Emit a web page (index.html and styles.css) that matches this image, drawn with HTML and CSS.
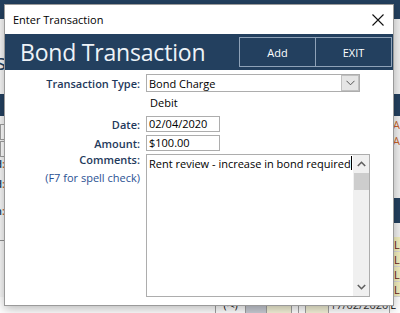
FILE: index.html
```html
<!DOCTYPE html>
<html lang="en">
<head>
    <meta charset="UTF-8">
    <title>Enter Transaction</title>
    <link rel="stylesheet" href="styles.css">
</head>
<body>

    <div class="app">
        <div class="app-top"></div>
        <div class="app-body">
            <div class="side side-left">
                <div class="big-s">s</div>
                <div class="navy-band"></div>
                <div class="cell-box"></div>
                <div class="cell-box"></div>
                <div class="fld">d<span>:</span></div>
                <div class="fld">d<span>:</span></div>
                <div class="fld fld-gap">n<span>:</span></div>
                <div class="rule"></div>
            </div>
            <div class="side side-right">
                <div class="navy-band"></div>
                <div class="tline">A</div>
                <div class="tline">A</div>
                <div class="navy-band band-low"></div>
                <div class="grid-head"></div>
                <div class="yrow">L</div>
                <div class="yrow">L</div>
                <div class="yrow">L</div>
                <div class="yrow">L</div>
            </div>
        </div>
        <div class="app-foot">
            <div class="fcell f-nav">(&middot;&lt;)</div>
            <div class="fcell f-grey"></div>
            <div class="fcell f-yel"></div>
            <div class="fcell f-sm"></div>
            <div class="fcell f-sm"></div>
            <div class="fcell f-yel2"></div>
            <div class="fcell f-date">17/02/2020</div>
            <div class="fcell f-last">L</div>
        </div>
    </div>

    <div class="dialog">
        <div class="titlebar">
            <span class="title">Enter Transaction</span>
            <svg class="close" width="12" height="12" viewBox="0 0 12 12">
                <path d="M0.5 0.5 L11.5 11.5 M11.5 0.5 L0.5 11.5" stroke="#111" stroke-width="1.1" fill="none"/>
            </svg>
        </div>

        <div class="banner">
            <h1>Bond Transaction</h1>
            <div class="banner-btns">
                <button class="hbtn">Add</button>
                <button class="hbtn">EXIT</button>
            </div>
        </div>

        <div class="form">
            <div class="row row-type">
                <label class="lbl">Transaction Type:</label>
                <div class="combo">
                    <span class="combo-val">Bond Charge</span>
                    <span class="combo-btn">
                        <svg width="9" height="6" viewBox="0 0 9 6">
                            <path d="M0.5 0.8 L4.5 4.8 L8.5 0.8" stroke="#555" stroke-width="1" fill="none"/>
                        </svg>
                    </span>
                </div>
            </div>
            <div class="row row-debit">
                <span class="lbl"></span>
                <span class="debit">Debit</span>
            </div>
            <div class="row row-date">
                <label class="lbl">Date:</label>
                <div class="field">02/04/2020</div>
            </div>
            <div class="row row-amount">
                <label class="lbl">Amount:</label>
                <div class="field">$100.00</div>
            </div>
            <div class="row row-comments">
                <div class="lbl lbl-stack">
                    <span>Comments:</span>
                    <span class="hint">(F7 for spell check)</span>
                </div>
                <div class="memo">
                    <div class="memo-text">Rent review - increase in bond required<span class="caret"></span></div>
                    <div class="vscroll">
                        <svg class="arr" width="9" height="6" viewBox="0 0 9 6">
                            <path d="M0.8 5 L4.5 1.3 L8.2 5" stroke="#606060" stroke-width="1.6" fill="none"/>
                        </svg>
                        <div class="thumb"></div>
                        <div class="track"></div>
                        <svg class="arr" width="9" height="6" viewBox="0 0 9 6">
                            <path d="M0.8 1 L4.5 4.7 L8.2 1" stroke="#606060" stroke-width="1.6" fill="none"/>
                        </svg>
                    </div>
                </div>
            </div>
        </div>
    </div>

</body>
</html>
```

FILE: styles.css
```css
body {
    margin: 0;
    width: 400px;
    height: 313px;
    overflow: hidden;
    position: relative;
    font-family: "Open Sans", "Noto Sans", sans-serif;
    background: #f0f0f0;
}

/* background application, mostly hidden by the dialog */
.app {
    display: flex;
    flex-direction: column;
    height: 313px;
}
.app-top {
    height: 25px;
    background: #23405f;
}
.app-body {
    flex: 1;
    display: flex;
    justify-content: space-between;
}
.side {
    display: flex;
    flex-direction: column;
    overflow: hidden;
}
.side-left {
    width: 5px;
    background: #f7f7f7;
    align-items: flex-end;
}
.big-s {
    margin-top: 27px;
    height: 30px;
    font-size: 22px;
    line-height: 30px;
    color: #23405f;
    margin-right: -1px;
}
.navy-band {
    align-self: stretch;
    margin-top: 18px;
    height: 22px;
    background: #23405f;
}
.cell-box {
    align-self: stretch;
    margin-top: 8px;
    height: 14px;
    border: 1px solid #a0a0a0;
    background: #fff;
    margin-bottom: -7px;
}
.fld {
    margin-top: 8px;
    font-size: 11px;
    line-height: 12px;
    color: #23405f;
    font-weight: 600;
    white-space: nowrap;
}
.fld span {
    color: #c8642a;
}
.fld-gap {
    margin-top: 15px;
}
.rule {
    align-self: stretch;
    margin-top: 23px;
    height: 1px;
    background: #909090;
}
.side-right {
    width: 7px;
    background: #f0f0f0;
}
.side-right .navy-band {
    margin-top: 75px;
}
.tline {
    margin-top: 2px;
    font-size: 11px;
    line-height: 14px;
    color: #c8642a;
}
.side-right .band-low {
    margin-top: 50px;
    height: 25px;
}
.grid-head {
    height: 14px;
}
.yrow {
    height: 14px;
    background: #f2eebc;
    border-bottom: 1px solid #d8d8d8;
    font-size: 11px;
    line-height: 15px;
    color: #6b1a1a;
    padding-left: 1px;
}
.app-foot {
    height: 16px;
    display: flex;
    background: #fff;
    padding-left: 215px;
    font-size: 11px;
    line-height: 16px;
}
.fcell {
    border-left: 1px solid #a0a0a0;
    height: 16px;
}
.f-nav { width: 30px; text-align: center; font-size: 10px; }
.f-grey { width: 20px; background: #c8ccd4; }
.f-yel { width: 25px; background: #f4f2d8; }
.f-sm { width: 6px; }
.f-yel2 { width: 23px; background: #f4f2d8; }
.f-date { width: 62px; text-align: center; color: #333; }
.f-last { width: 10px; }

/* dialog window */
.dialog {
    position: absolute;
    left: 4px;
    top: 4px;
    width: 388px;
    height: 300px;
    background: #fff;
    border: 1px solid #9a9a9a;
    box-shadow: 0 3px 10px rgba(0, 0, 0, 0.28);
    display: flex;
    flex-direction: column;
}
.titlebar {
    height: 29px;
    display: flex;
    align-items: center;
    justify-content: space-between;
    padding: 0 9px 0 8px;
}
.title {
    font-size: 11px;
    color: #000;
}
.banner {
    height: 36px;
    background: #23405f;
    display: flex;
    justify-content: space-between;
    align-items: center;
    padding: 0 1px 0 15px;
}
.banner h1 {
    margin: 0;
    font-weight: 400;
    font-size: 23px;
    color: #eef3f8;
    letter-spacing: -0.2px;
}
.banner-btns {
    display: flex;
    height: 30px;
}
.hbtn {
    width: 77px;
    height: 30px;
    background: #23405f;
    border: 1px solid #8ea2b8;
    color: #fff;
    font-family: inherit;
    font-size: 11px;
    padding: 0;
}
.hbtn + .hbtn {
    margin-left: -1px;
}

.form {
    padding-top: 4px;
    font-size: 11px;
}
.row {
    display: flex;
    align-items: center;
}
.lbl {
    width: 135px;
    text-align: right;
    padding-right: 6px;
    color: #1f3a5c;
    font-weight: 600;
}
.combo {
    width: 210px;
    height: 16px;
    border: 1px solid #adadad;
    display: flex;
    justify-content: space-between;
    align-items: center;
    padding-left: 2px;
}
.combo-val {
    color: #000;
}
.combo-btn {
    width: 16px;
    height: 14px;
    background: #e5e5e5;
    border: 1px solid #c0c0c0;
    display: flex;
    align-items: center;
    justify-content: center;
}
.row-debit {
    height: 20px;
}
.debit {
    padding-left: 4px;
    color: #000;
}
.row-date {
    margin-top: 4px;
}
.row-amount {
    margin-top: 3px;
}
.field {
    width: 70px;
    height: 14px;
    border: 1px solid #adadad;
    padding-left: 2px;
    line-height: 14px;
    color: #000;
}
.row-comments {
    margin-top: 3px;
    align-items: flex-start;
}
.lbl-stack {
    display: flex;
    flex-direction: column;
    line-height: 18px;
    margin-top: -3px;
}
.hint {
    font-weight: 400;
    color: #2a5193;
}
.memo {
    width: 222px;
    height: 141px;
    border: 1px solid #adadad;
    display: flex;
}
.memo-text {
    flex: 1;
    padding: 1px 0 0 2px;
    color: #000;
    white-space: nowrap;
    overflow: hidden;
    line-height: 15px;
}
.caret {
    display: inline-block;
    width: 1px;
    height: 14px;
    background: #000;
    vertical-align: -2px;
}
.vscroll {
    width: 16px;
    background: #f0f0f0;
    display: flex;
    flex-direction: column;
    align-items: center;
}
.arr {
    margin: 6px 0;
}
.thumb {
    width: 15px;
    height: 17px;
    background: #cdcdcd;
}
.track {
    flex: 1;
}
```
